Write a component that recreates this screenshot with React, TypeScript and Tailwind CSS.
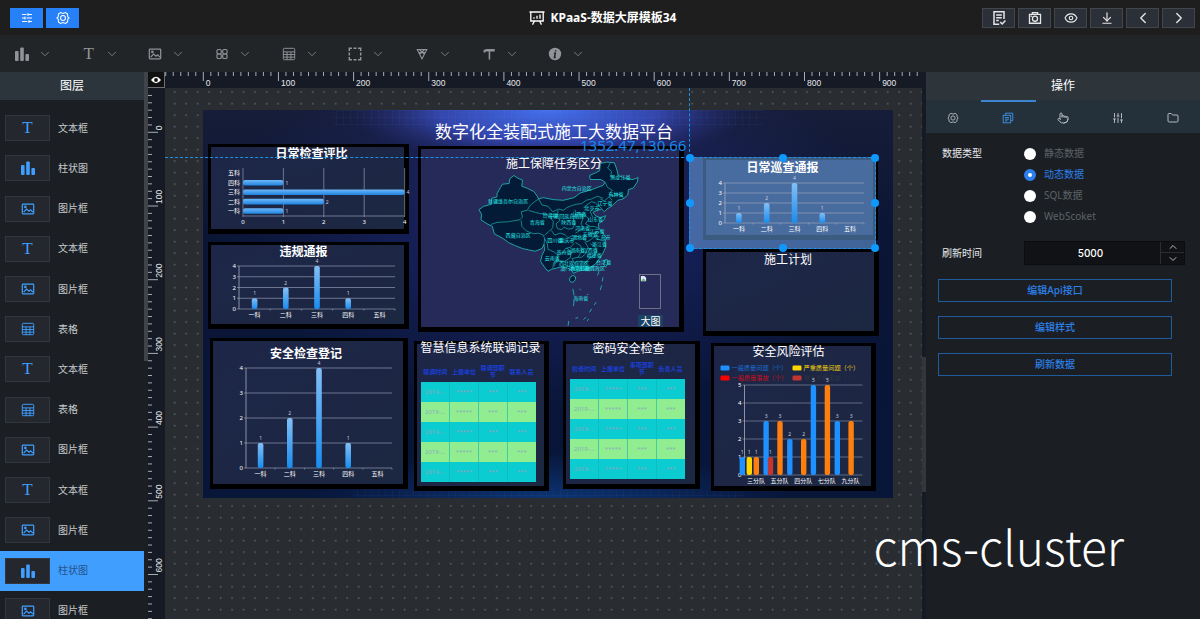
import React, { useState } from 'react';
import {
  ArrowDownToLine,
  ChevronDown,
  ChevronLeft,
  ChevronRight,
  ChevronUp,
  Eye,
  Folder,
  Pointer,
  SlidersHorizontal,
  SlidersVertical,
} from 'lucide-react';

type IconProps = { className?: string };

// ---------- Icons ----------

function BarsIcon({ className }: IconProps) {
  return (
    <svg viewBox="0 0 16 16" className={className} fill="currentColor">
      <rect x="1" y="5" width="3.6" height="10" rx="1" />
      <rect x="6.2" y="1.5" width="3.6" height="13.5" rx="1" />
      <rect x="11.4" y="8" width="3.6" height="7" rx="1" />
    </svg>
  );
}

function ImageIcon({ className }: IconProps) {
  return (
    <svg viewBox="0 0 16 16" className={className} fill="none" stroke="currentColor" strokeWidth="1.4">
      <rect x="1.5" y="2.5" width="13" height="11" rx="0.8" />
      <path d="M3 11.5 6.4 8l2.8 2.6L11 9l2.6 2.6" />
      <circle cx="5" cy="5.6" r="0.8" />
    </svg>
  );
}

function TableIcon({ className }: IconProps) {
  return (
    <svg viewBox="0 0 16 16" className={className} fill="none" stroke="currentColor" strokeWidth="1.1">
      <rect x="1.5" y="1.5" width="13" height="13" rx="1.2" />
      <path d="M1.5 5.6h13M1.5 8.6h13M1.5 11.6h13M5.8 5.6v8.9M10.2 5.6v8.9" />
    </svg>
  );
}

function LoopsIcon({ className }: IconProps) {
  return (
    <svg viewBox="0 0 16 16" className={className} fill="none" stroke="currentColor" strokeWidth="1.3">
      <rect x="2.2" y="2.8" width="5" height="5.2" rx="1.6" />
      <rect x="8.8" y="2.8" width="5" height="5.2" rx="1.6" />
      <rect x="2.2" y="8" width="5" height="5.2" rx="1.6" />
      <rect x="8.8" y="8" width="5" height="5.2" rx="1.6" />
    </svg>
  );
}

function DashedBoxIcon({ className }: IconProps) {
  return (
    <svg viewBox="0 0 16 16" className={className} fill="none" stroke="currentColor" strokeWidth="1.7">
      <path d="M1.5 4.5v-3h3M6.3 1.5h3.4M11.5 1.5h3v3M14.5 6.3v3.4M14.5 11.5v3h-3M9.7 14.5H6.3M4.5 14.5h-3v-3M1.5 9.7V6.3" />
    </svg>
  );
}

function FunnelIcon({ className }: IconProps) {
  return (
    <svg viewBox="0 0 16 16" className={className} fill="none" stroke="currentColor" strokeWidth="1.2">
      <path d="M2.5 3h11L8 13.5zM5 3l5.6 5.5M11 3 5.4 8.5M4.2 6.2h7.6" />
    </svg>
  );
}

function BrushIcon({ className }: IconProps) {
  return (
    <svg viewBox="0 0 16 16" className={className} fill="currentColor">
      <path d="M4 2.2h10.500v3H4zM1.800 3.200h2.200v3.200H1.800zM7.600 5.200h1.800v9.200H7.600z" />
    </svg>
  );
}

function InfoIcon({ className }: IconProps) {
  return (
    <svg viewBox="0 0 16 16" className={className}>
      <circle cx="8" cy="8" r="6.2" fill="currentColor" />
      <path d="M8.6 4.2v1.4M7 7.2h1.3l-.9 4.4h1.4" fill="none" stroke="#212528" strokeWidth="1.5" />
    </svg>
  );
}

function HexGearIcon({ className }: IconProps) {
  return (
    <svg viewBox="0 0 16 16" className={className} fill="none" stroke="currentColor" strokeWidth="1.2">
      <path d="M5.2 1.8 8 2.8l2.8-1 2.4 1.8.2 3L15 8l-1.6 1.4-.2 3-2.4 1.8-2.8-1-2.8 1-2.4-1.8-.2-3L1 8l1.6-1.4.2-3z" />
      <circle cx="8" cy="8" r="2.8" />
    </svg>
  );
}

function NoteCheckIcon({ className }: IconProps) {
  return (
    <svg viewBox="0 0 16 16" className={className} fill="none" stroke="currentColor" strokeWidth="1.5">
      <path d="M13 9V1.8H3v12.4h5.2M5.2 5h5.6M5.2 7.8h5.6M5.2 10.6h2.6M9.2 12l2 2 3.2-3.4" />
    </svg>
  );
}

function CameraIcon({ className }: IconProps) {
  return (
    <svg viewBox="0 0 16 16" className={className} fill="none" stroke="currentColor" strokeWidth="1.5">
      <path d="M1.7 3.800h12.600v10.200H1.700zM5 3.800V1.800h6v2" />
      <circle cx="8" cy="8.800" r="2.900" />
      <path d="M3 6h1.400" />
    </svg>
  );
}

function CopyDocIcon({ className }: IconProps) {
  return (
    <svg viewBox="0 0 16 16" className={className} fill="none" stroke="currentColor" strokeWidth="1.3">
      <path d="M4.6 4V1.6h9.8v9.8H12" />
      <rect x="1.6" y="4.4" width="10" height="10" />
      <path d="M4 7.4h5.2M4 9.6h5.2M4 11.8h3.2" />
    </svg>
  );
}

function BoardIcon({ className }: IconProps) {
  return (
    <svg viewBox="0 0 16 16" className={className} fill="none" stroke="currentColor" strokeWidth="1.3">
      <path d="M.5 2h15M1.8 2v9h12.4V2M5.5 11l-2 3.6M10.5 11l2 3.6M5 8.8V7.2M8 8.8V5.8M11 8.8V4.6" />
    </svg>
  );
}

// ---------- Data ----------

type LayerKind = 'text' | 'bar' | 'image' | 'table';

const LAYER_NAMES: Record<LayerKind, string> = {
  text: '文本框',
  bar: '柱状图',
  image: '图片框',
  table: '表格',
};

const LAYERS: LayerKind[] = [
  'text', 'bar', 'image', 'text', 'image', 'table', 'text',
  'table', 'image', 'text', 'image', 'bar', 'image',
];

const DEPTS = ['一科', '二科', '三科', '四科', '五科'];
const DEPT_VALUES = [1, 2, 4, 1, 0];

const DATA_TYPES = ['静态数据', '动态数据', 'SQL数据', 'WebScoket'];

function LayerIcon({ kind }: { kind: LayerKind }) {
  if (kind === 'text') return <span className="font-['Liberation_Serif',serif] text-[17px] leading-5">T</span>;
  if (kind === 'bar') return <BarsIcon className="h-4 w-4" />;
  if (kind === 'image') return <ImageIcon className="h-3.5 w-3.5" />;
  return <TableIcon className="h-3.5 w-3.5" />;
}

// ---------- Header and toolbar ----------

function Header() {
  const actions = [
    { label: '保存', icon: <NoteCheckIcon className="h-4 w-4" /> },
    { label: '截图', icon: <CameraIcon className="h-3.5 w-3.5" /> },
    { label: '预览', icon: <Eye className="h-3.5 w-3.5" /> },
    { label: '下载', icon: <ArrowDownToLine className="h-3.5 w-3.5" /> },
    { label: '撤销', icon: <ChevronLeft className="h-[18px] w-[18px]" strokeWidth={1.8} /> },
    { label: '重做', icon: <ChevronRight className="h-[18px] w-[18px]" strokeWidth={1.8} /> },
  ];

  return (
    <header className="grid h-[35px] shrink-0 grid-cols-[1fr_auto_1fr] items-center bg-[#1e1e1e] pl-2.5 pr-[5px]">
      <div className="flex gap-[3px]">
        <button type="button" aria-label="图层" className="flex h-5 w-[33px] items-center justify-center bg-[#2680f7] text-white">
          <SlidersHorizontal className="h-3 w-3" />
        </button>
        <button type="button" aria-label="设置" className="flex h-5 w-[33px] items-center justify-center bg-[#2680f7] text-white">
          <HexGearIcon className="h-3.5 w-3.5" />
        </button>
      </div>
      <h1 className="flex items-center gap-1.5 text-xs font-bold text-white">
        <BoardIcon className="h-4 w-4" />
        KPaaS-数据大屏模板34
      </h1>
      <div className="flex justify-end gap-[3px]">
        {actions.map((a) => (
          <button
            key={a.label}
            type="button"
            aria-label={a.label}
            className="flex h-5 w-[33px] items-center justify-center border border-[#41454c] bg-[#2b2f38] text-[#e6e6e6]"
          >
            {a.icon}
          </button>
        ))}
      </div>
    </header>
  );
}

function Toolbar() {
  const tools = [
    { label: '图表', icon: <BarsIcon className="h-4 w-4" /> },
    { label: '文本', icon: <span className="font-['Liberation_Serif',serif] text-[17px] leading-5">T</span> },
    { label: '图片', icon: <ImageIcon className="h-3.5 w-3.5" /> },
    { label: '组件', icon: <LoopsIcon className="h-3.5 w-3.5" /> },
    { label: '表格', icon: <TableIcon className="h-3.5 w-3.5" /> },
    { label: '边框', icon: <DashedBoxIcon className="h-3.5 w-3.5" /> },
    { label: '筛选', icon: <FunnelIcon className="h-3.5 w-3.5" /> },
    { label: '样式', icon: <BrushIcon className="h-3.5 w-3.5" /> },
    { label: '信息', icon: <InfoIcon className="h-4 w-4" /> },
  ];

  return (
    <nav className="h-[37px] shrink-0 bg-[#212528]">
      <div className="grid h-full w-[600px] grid-cols-9">
        {tools.map((t) => (
          <button key={t.label} type="button" aria-label={t.label} className="flex items-center gap-2 pl-3.5 text-[#909498]">
            <span className="flex w-4 justify-center">{t.icon}</span>
            <ChevronDown className="h-3.5 w-3.5 text-[#7d8185]" strokeWidth={1.6} />
          </button>
        ))}
      </div>
    </nav>
  );
}

// ---------- Left layers panel ----------

function LayerPanel() {
  const [selected, setSelected] = useState(11);

  return (
    <aside className="flex w-[148px] shrink-0 bg-[#1b1f23]">
      <div className="flex w-36 flex-col">
        <h2 className="flex h-7 shrink-0 items-center justify-center bg-[#2d353c] text-xs text-white">图层</h2>
        <div className="min-h-0 flex-1 overflow-hidden pt-2">
          <ul className="grid h-[523px] auto-rows-fr">
            {LAYERS.map((kind, i) => (
              <li key={i}>
                <button
                  type="button"
                  onClick={() => setSelected(i)}
                  className={
                    selected === i
                      ? 'flex h-full w-full items-center gap-2 bg-[#409eff] pl-[5px] text-[10px] text-[#24548c]'
                      : 'flex h-full w-full items-center gap-2 pl-[5px] text-[10px] text-[#c5c9cd]'
                  }
                >
                  <span className="flex h-[26px] w-[45px] items-center justify-center border border-[#32373d] bg-[#24282e] text-[#409eff]">
                    <LayerIcon kind={kind} />
                  </span>
                  {LAYER_NAMES[kind]}
                </button>
              </li>
            ))}
          </ul>
        </div>
      </div>
      <div className="h-[289px] w-1 bg-[#40444a]" />
    </aside>
  );
}

// ---------- Rulers ----------

const H_STEP = 7.515;
const V_STEP = 7.37;

function HorizontalRuler() {
  const ticks = Array.from({ length: 101 }, (_, i) => i - 5);
  return (
    <svg className="h-4 min-w-0 flex-1 bg-[#151a24] font-['Liberation_Sans',sans-serif]" aria-hidden="true">
      {ticks.map((t) => {
        const x = 38.3 + t * H_STEP;
        const major = t % 10 === 0;
        return (
          <g key={t}>
            <line x1={x} x2={x} y1="0" y2={major ? 9 : 4} stroke="#b9bdc4" strokeWidth="0.9" />
            {major && (
              <text x={x + 2.5} y="14" fontSize="8.5" fill="#e4e6ea">
                {t * 10}
              </text>
            )}
          </g>
        );
      })}
    </svg>
  );
}

function VerticalRuler() {
  const ticks = Array.from({ length: 72 }, (_, i) => i - 5);
  return (
    <svg className="h-full w-[17px] shrink-0 bg-[#151a24] font-['Liberation_Sans',sans-serif]" aria-hidden="true">
      {ticks.map((t) => {
        const y = 44.3 + t * V_STEP;
        const major = t % 10 === 0;
        return (
          <g key={t}>
            <line x1="0" x2={major ? 10 : 4} y1={y} y2={y} stroke="#b9bdc4" strokeWidth="0.9" />
            {major && (
              <text transform={`translate(14 ${y - 2}) rotate(-90)`} fontSize="8.5" fill="#e4e6ea">
                {t * 10}
              </text>
            )}
          </g>
        );
      })}
    </svg>
  );
}

// ---------- Charts ----------

interface ColumnChartProps {
  width: number;
  height: number;
  left: number;
  right: number;
  top: number;
  bottom: number;
}

function ColumnChart({ width, height, left, right, top, bottom }: ColumnChartProps) {
  const step = (right - left) / 5;
  const unit = (bottom - top) / 4;
  return (
    <svg viewBox={`0 0 ${width} ${height}`} className="absolute inset-0 h-full w-full overflow-visible">
      <defs>
        <linearGradient id="column" x1="0" y1="0" x2="0" y2="1">
          <stop offset="0" stopColor="#83bff6" />
          <stop offset="1" stopColor="#188df0" />
        </linearGradient>
      </defs>
      {[0, 1, 2, 3, 4].map((n) => (
        <g key={n}>
          <line x1={left - 2} x2={right} y1={bottom - n * unit} y2={bottom - n * unit} stroke="#a3adc4" strokeWidth="0.6" />
          <text x={left - 3} y={bottom - n * unit + 2} fontSize="6" fill="#fff" textAnchor="end">
            {n}
          </text>
        </g>
      ))}
      <line x1={left} x2={left} y1={top} y2={bottom} stroke="#a3adc4" strokeWidth="0.8" />
      {DEPTS.map((name, i) => {
        const x = left + (i + 0.5) * step;
        const h = DEPT_VALUES[i] * unit;
        return (
          <g key={name}>
            <line x1={x + step / 2} x2={x + step / 2} y1={bottom} y2={bottom + 1.5} stroke="#a3adc4" strokeWidth="0.6" />
            {h > 0 && <rect x={x - 2.8} y={bottom - h} width="5.6" height={h} rx="2" fill="url(#column)" />}
            {h > 0 && (
              <text x={x} y={bottom - h - 3} fontSize="5" fill="#c9cfdd" textAnchor="middle">
                {DEPT_VALUES[i]}
              </text>
            )}
            <text x={x} y={bottom + 8} fontSize="6" fill="#fff" textAnchor="middle">
              {name}
            </text>
          </g>
        );
      })}
    </svg>
  );
}

function RowChart() {
  return (
    <svg viewBox="0 0 193 82" className="absolute inset-0 h-full w-full overflow-visible">
      <defs>
        <linearGradient id="row" x1="0" y1="0" x2="0" y2="1">
          <stop offset="0" stopColor="#6fb8f8" />
          <stop offset="1" stopColor="#1f83e0" />
        </linearGradient>
      </defs>
      {[0, 1, 2, 3, 4].map((n) => (
        <g key={n}>
          <line x1={32 + n * 40.4} x2={32 + n * 40.4} y1="21" y2="70" stroke="#a3adc4" strokeWidth="0.6" />
          <text x={32 + n * 40.4} y="77" fontSize="6" fill="#fff" textAnchor="middle">
            {n}
          </text>
        </g>
      ))}
      <line x1="32" x2="193.6" y1="69" y2="69" stroke="#a3adc4" strokeWidth="0.6" />
      {DEPTS.map((name, i) => {
        const y = 64 - i * 9.4;
        const w = DEPT_VALUES[i] * 40.4;
        return (
          <g key={name}>
            <text x="29" y={y + 2} fontSize="6" fill="#fff" textAnchor="end">
              {name}
            </text>
            {w > 0 && <rect x="32" y={y - 2.8} width={w} height="5.6" rx="2" fill="url(#row)" />}
            {w > 0 && (
              <text x={34 + w} y={y + 2} fontSize="5" fill="#c9cfdd">
                {DEPT_VALUES[i]}
              </text>
            )}
          </g>
        );
      })}
    </svg>
  );
}

const RISK_BARS = [
  { x: -2.2, v: 1, c: '#1e90ff' },
  { x: 4.8, v: 1, c: '#ffd700' },
  { x: 11.8, v: 1, c: '#ff7f0e' },
  { x: 21.6, v: 3, c: '#1e90ff' },
  { x: 26, v: 1, c: '#c23531' },
  { x: 35.5, v: 3, c: '#ff7f0e' },
  { x: 45.3, v: 2, c: '#1e90ff' },
  { x: 59.2, v: 2, c: '#ff7f0e' },
  { x: 68.9, v: 5, c: '#1e90ff' },
  { x: 82.9, v: 5, c: '#ff7f0e' },
  { x: 92.8, v: 3, c: '#1e90ff' },
  { x: 106.6, v: 3, c: '#ff7f0e' },
];

const RISK_LEGEND = [
  { x: 6, y: 22, c: '#1e90ff', t: '#1c6fd0', name: '一般质量问题（个）' },
  { x: 78, y: 22, c: '#ffd700', t: '#f2d10a', name: '严重质量问题（个）' },
  { x: 6, y: 32, c: '#ff0000', t: '#c4101c', name: '一般质量事故（个）' },
  { x: 78, y: 32, c: '#c23531', t: '#2b3140', name: '重大质量事故（个）' },
];

function RiskChart() {
  return (
    <svg viewBox="0 0 156 140" className="absolute inset-0 h-full w-full overflow-visible">
      {RISK_LEGEND.map((l) => (
        <g key={l.name}>
          <rect x={l.x} y={l.y - 2.5} width="9" height="5" rx="1.2" fill={l.c} />
          <text x={l.x + 11} y={l.y + 2.3} fontSize="6.2" fill={l.t}>
            {l.name}
          </text>
        </g>
      ))}
      {[0, 1, 2, 3, 4, 5].map((n) => (
        <g key={n}>
          <line x1="28" x2="148" y1={129 - n * 18} y2={129 - n * 18} stroke="#8f98ad" strokeWidth="0.6" />
          <text x="27" y={131 - n * 18} fontSize="6" fill="#fff" textAnchor="end">
            {n}
          </text>
        </g>
      ))}
      <line x1="30" x2="30" y1="39" y2="129" stroke="#a3adc4" strokeWidth="0.8" />
      {RISK_BARS.map((b) => (
        <g key={b.x}>
          <rect x={27.3 + b.x} y={129 - b.v * 18} width="5.4" height={b.v * 18} rx="2" fill={b.c} />
          <text x={30 + b.x} y={126 - b.v * 18} fontSize="5" fill="#c9cfdd" textAnchor="middle">
            {b.v}
          </text>
        </g>
      ))}
      {['三分队', '五分队', '四分队', '七分队', '九分队'].map((name, i) => (
        <text key={name} x={41.5 + i * 23.6} y="137" fontSize="6" fill="#fff" textAnchor="middle">
          {name}
        </text>
      ))}
    </svg>
  );
}

// ---------- Map ----------

const PROVINCES: [number, number, string][] = [
  [295, 295, '新疆维吾尔自治区'],
  [500, 257, '内蒙古自治区'],
  [630, 224, '黑龙江省'],
  [617, 276, '吉林省'],
  [584, 302, '辽宁省'],
  [545, 318, '北京市'],
  [420, 337, '甘肃省'],
  [470, 341, '宁夏回族自治区'],
  [506, 336, '山西省'],
  [556, 350, '山东省'],
  [382, 360, '青海省'],
  [476, 358, '陕西省'],
  [517, 376, '河南省'],
  [325, 399, '西藏自治区'],
  [560, 386, '江苏省'],
  [540, 396, '安徽省'],
  [578, 403, '上海市'],
  [434, 413, '四川省'],
  [470, 413, '重庆市'],
  [508, 404, '湖北省'],
  [568, 425, '浙江省'],
  [462, 447, '贵州省'],
  [502, 443, '湖南省'],
  [540, 443, '江西省'],
  [552, 458, '福建省'],
  [427, 466, '云南省'],
  [484, 480, '广西壮族自治区'],
  [580, 479, '台湾省'],
  [514, 495, '广东省'],
  [532, 496, '香港特别行政区'],
  [503, 497, '澳门特别行政区'],
  [512, 584, '海南省'],
];

function ChinaMap() {
  return (
    <svg viewBox="36 135 768 531" className="absolute inset-0 h-full w-full">
      <g fill="#031b36" stroke="#1fb5b5" strokeWidth="2.6" strokeLinejoin="round">
        <path d="M208 316 222 306 245 300 246 282 262 278 262 268 272 250 278 240 298 238 300 224 312 214 324 222 338 228 336 246 352 252 372 262 382 276 386 284 400 280 430 286 460 288 492 280 510 266 540 258 560 250 578 244 584 234 572 226 540 226 538 214 556 206 568 200 570 178 590 174 612 176 618 192 624 214 648 224 668 226 683 220 680 234 668 252 654 256 652 272 638 284 622 288 606 304 590 314 582 322 574 314 560 318 548 324 556 334 570 340 586 334 580 348 564 358 566 372 578 386 588 400 584 414 586 428 578 446 568 462 556 478 540 488 520 496 502 500 490 506 484 496 472 490 456 486 440 490 424 494 414 500 404 488 392 470 396 452 404 436 402 420 396 432 376 440 356 436 338 432 318 424 296 414 280 402 254 388 248 366 232 358 214 346 216 330z" />
        <path d="M480 518 488 512 496 516 496 524 490 532 482 532 478 526z" />
        <path d="M584 466 590 464 592 474 586 488 580 480z" />
      </g>
      <g fill="none" stroke="#1fb5b5" strokeWidth="2" strokeLinejoin="round">
        <path d="M244 360 262 354 296 352 330 346 338 338 334 322 352 318 360 304 374 292 386 284" />
        <path d="M334 348 336 366 350 380 372 388 386 386 400 392 404 402 402 422" />
        <path d="M356 318 376 324 392 328 406 326 418 338 430 350 428 370 418 380 404 392" />
        <path d="M386 284 396 302 414 306 428 322 446 314 460 318 470 310 484 304 498 300 514 298 528 288 544 284 562 276 578 282" />
        <path d="M444 318 442 336 450 348 438 358 442 372 454 376 462 368 474 374 488 372 494 358 490 344 498 326 494 316" />
        <path d="M494 332 514 328 518 342 512 360 522 370 506 380 496 386M520 322 528 336 536 344 526 358 540 366 552 366 566 372" />
        <path d="M424 378 434 392 450 386 464 390 474 400 486 394 504 396 520 404 530 412 544 404 552 396 560 404 584 410" />
        <path d="M404 402 412 418 414 434 432 442 444 452 458 444 466 432 482 428 492 416M444 452 442 464 432 472 428 490M470 430 484 444 480 460 464 470 448 468 434 476" />
        <path d="M496 414 512 424 514 440 504 458 486 462M524 412 534 428 526 448 514 458 504 458M540 418 554 426 560 440 546 456 532 466 522 478M486 462 492 476 504 470 522 470" />
        <path d="M584 234 592 250 606 258 596 270 610 276 626 270 640 280M600 176 592 192 604 202 600 218 618 222M570 284 582 290 596 278 606 288" />
        <path d="M520 310 530 302 544 292 556 296 564 304 574 312M548 340 540 322 550 312" />
      </g>
      <g fill="none" stroke="#1fb5b5" strokeWidth="2.6">
        <path d="M488 552l4 20M492 586l-2 18M476 648l-2 14M496 640l8-2M520 644l8-8M530 648l6-6M544 612l-6 10M552 600l6-8M570 556l4-14M576 530l2-12M508 552l4 4M530 570l4-2M566 500l-4 12" />
      </g>
      {PROVINCES.map(([x, y, name]) => (
        <text key={name} x={x} y={y} fontSize="15" fill="#26e6e6" textAnchor="middle">
          {name}
        </text>
      ))}
    </svg>
  );
}

// ---------- Board widgets ----------

interface WidgetProps {
  title?: string;
  place: string;
  titleClass?: string;
  children?: React.ReactNode;
}

function WidgetTitle({ title, className }: { title: string; className?: string }) {
  return <h3 className={`relative text-center text-xs leading-[14px] whitespace-nowrap text-white ${className}`}>{title}</h3>;
}

function Widget({ title, place, titleClass, children }: WidgetProps) {
  return (
    <section
      className={`absolute border-b-[5px] border-l-[3px] border-r-[5px] border-t-[3px] border-black bg-gradient-to-br from-[#1d2648] to-[#1c2741] ${place}`}
    >
      {children}
      {title && <WidgetTitle title={title} className={titleClass} />}
    </section>
  );
}

function DataTable({ place, headers }: { place: string; headers: string[] }) {
  return (
    <table className={`absolute w-[115px] table-fixed border-collapse text-[6px] leading-[7px] ${place}`}>
      <thead>
        <tr className="h-5 text-[#1b3fd6]">
          {headers.map((h) => (
            <th key={h} className="px-0.5 font-bold">{h}</th>
          ))}
        </tr>
      </thead>
      <tbody>
        {[0, 1, 2, 3, 4].map((r) => (
          <tr key={r} className="h-5 text-center text-[#8fa6bd] odd:bg-[#0bccd0] even:bg-[#90ee90]">
            <td className="border-r border-[#10b4b4]/60 pl-1 text-left">2019-...</td>
            <td className="border-r border-[#10b4b4]/60">*****</td>
            <td className="border-r border-[#10b4b4]/60">***</td>
            <td>***</td>
          </tr>
        ))}
      </tbody>
    </table>
  );
}

function BoardBackground() {
  return (
    <svg viewBox="0 0 690 388" preserveAspectRatio="none" className="absolute inset-0 h-full w-full">
      <defs>
        <linearGradient id="base" x1="0" y1="0" x2="0" y2="1">
          <stop offset="0" stopColor="#161d38" />
          <stop offset="0.3" stopColor="#0b1535" />
          <stop offset="1" stopColor="#08163a" />
        </linearGradient>
        <radialGradient id="middle">
          <stop offset="0" stopColor="#222a7a" stopOpacity="0.8" />
          <stop offset="1" stopColor="#222a7a" stopOpacity="0" />
        </radialGradient>
        <radialGradient id="glow">
          <stop offset="0" stopColor="#4471ee" />
          <stop offset="0.55" stopColor="#3a4fc4" stopOpacity="0.8" />
          <stop offset="1" stopColor="#2a2f80" stopOpacity="0" />
        </radialGradient>
        <radialGradient id="floor">
          <stop offset="0" stopColor="#0f4a9c" stopOpacity="0.6" />
          <stop offset="1" stopColor="#0f4a9c" stopOpacity="0" />
        </radialGradient>
        <pattern id="mesh" width="7" height="7" patternUnits="userSpaceOnUse">
          <path d="M7 0H0V7" fill="none" stroke="#6f8cf0" strokeOpacity="0.16" strokeWidth="0.6" />
        </pattern>
      </defs>
      <rect width="690" height="388" fill="url(#base)" />
      <ellipse cx="345" cy="110" rx="330" ry="190" fill="url(#middle)" />
      <ellipse cx="345" cy="0" rx="200" ry="56" fill="url(#glow)" />
      <ellipse cx="345" cy="392" rx="240" ry="50" fill="url(#floor)" />
      <rect x="130" width="430" height="16" fill="url(#mesh)" />
      <rect x="150" y="380" width="390" height="8" fill="url(#mesh)" />
    </svg>
  );
}

function Handle({ place }: { place: string }) {
  return <span className={`absolute h-2 w-2 rounded-full bg-[#0d99ff] ${place}`} />;
}

function Board() {
  return (
    <div className="absolute left-[38px] top-[22px] h-[388px] w-[690px]">
      <BoardBackground />
      <h2 className="absolute left-0 top-3 w-full pl-3 text-center text-[17px] leading-5 text-white">
        数字化全装配式施工大数据平台
      </h2>

      <Widget title="日常检查评比" place="left-[5px] top-[34px] h-[90px] w-[201px]" titleClass="pl-2 font-bold">
        <RowChart />
      </Widget>
      <Widget title="违规通报" place="left-[5px] top-[132px] h-[87px] w-[201px]" titleClass="pr-2 font-bold">
        <ColumnChart width={193} height={79} left={28} right={184} top={21} bottom={64} />
      </Widget>
      <Widget title="安全检查登记" place="left-[7px] top-[228px] h-[151px] w-[198px]" titleClass="pr-1 pt-1.5 font-bold">
        <ColumnChart width={190} height={143} left={33} right={179} top={27} bottom={127} />
      </Widget>

      <Widget title="施工保障任务区分" place="left-[215px] top-[36px] h-[186px] w-[266px]" titleClass="pl-2 pt-2">
        <div className="absolute inset-0 bg-[#262a58]" />
        <ChinaMap />
        <div className="absolute bottom-[18px] right-[18px] h-[35px] w-[22px] border border-[#6d7086]">
          <svg viewBox="0 0 8 8" className="h-[7px] w-[7px]">
            <path d="M1 1h4l2 2v4H1z" fill="#dfe9f5" />
            <path d="M1.500 6.500 4 4l2.500 2.500z" fill="#4caf50" />
          </svg>
        </div>
        <button type="button" className="absolute bottom-0 right-4 h-3 w-[25px] bg-[#1b4265] text-[10px] leading-3 text-white">
          大图
        </button>
      </Widget>
      <Widget title="智慧信息系统联调记录" place="left-[211px] top-[231px] h-[150px] w-[135px]" titleClass="-mt-[3px]">
        <DataTable place="left-1 top-[18px]" headers={['联调时间', '上报单位', '联调部职节', '联系人员']} />
      </Widget>
      <Widget title="密码安全检查" place="left-[360px] top-[231px] h-[148px] w-[137px]" titleClass="-mt-0.5 pr-1">
        <DataTable place="left-1 top-[15px]" headers={['检查时间', '上报单位', '事项部职节', '负责人员']} />
      </Widget>

      <Widget place="left-[500px] top-[47px] h-[83px] w-[175px]" />
      <Widget title="施工计划" place="left-[500px] top-[139px] h-[87px] w-[176px]" titleClass="pr-1 pt-px" />
      <Widget title="安全风险评估" place="left-[508px] top-[233px] h-[148px] w-[165px]" titleClass="-mt-px pr-2">
        <RiskChart />
      </Widget>

      {/* Selected widget: tinted box with its guides and handles */}
      <div className="absolute -left-[38px] top-[47px] w-[524px] border-t border-dashed border-[#1a93e6]" />
      <div className="absolute -top-[22px] left-[486px] h-[69px] border-l border-dashed border-[#1a93e6]" />
      <div className="absolute left-[486px] top-[47px] h-[92px] w-[187px] border border-dashed border-[#1a93e6] bg-[#6ea6ea]/55">
        <div className="absolute left-4 top-0.5 h-[75px] w-[167px]">
          <ColumnChart width={167} height={75} left={19} right={158} top={23} bottom={63} />
          <WidgetTitle title="日常巡查通报" className="pr-3.5 pt-px font-bold" />
        </div>
        <Handle place="-left-1 -top-1" />
        <Handle place="left-[89px] -top-1" />
        <Handle place="-right-1 -top-1" />
        <Handle place="-left-1 top-[41px]" />
        <Handle place="-right-1 top-[41px]" />
        <Handle place="-bottom-1 -left-1" />
        <Handle place="-bottom-1 left-[89px]" />
        <Handle place="-bottom-1 -right-1" />
      </div>
      <span className="absolute left-[377px] top-[25px] text-[15px] leading-5 text-[#1789ee]">1352.47,130.66</span>
    </div>
  );
}

function Workspace() {
  return (
    <main className="flex min-w-0 flex-1 flex-col bg-[#151a24]">
      <div className="flex shrink-0">
        <button type="button" aria-label="显示标尺" className="flex h-4 w-[17px] items-center justify-center border-b border-r border-[#6b6f76] bg-[#111]">
          <svg viewBox="0 0 12 12" className="h-3 w-3">
            <path d="M1 6q5-6.5 10 0Q6 12.5 1 6z" fill="#fff" />
            <circle cx="6" cy="6" r="1.9" fill="#111" />
          </svg>
        </button>
        <HorizontalRuler />
      </div>
      <div className="flex min-h-0 flex-1">
        <VerticalRuler />
        <div className="relative min-w-0 flex-1 overflow-hidden bg-[#292d32]">
          <svg className="absolute inset-0 h-full w-full" aria-hidden="true">
            <defs>
              <pattern id="dots" width="11.5" height="11.5" patternUnits="userSpaceOnUse" x="4" y="-1.5">
                <rect x="5" y="5" width="1.3" height="1.3" fill="#73777c" />
              </pattern>
            </defs>
            <rect width="100%" height="100%" fill="url(#dots)" />
          </svg>
          <Board />
        </div>
        <div className="w-1 pt-[269px]">
          <div className="h-[135px] bg-[#33373b]" />
        </div>
      </div>
    </main>
  );
}

// ---------- Right operations panel ----------

function OperationPanel() {
  const [tab, setTab] = useState(1);
  const [dataType, setDataType] = useState('动态数据');
  const [interval, setIntervalValue] = useState(5000);

  const tabs = [
    { label: '配置', icon: <HexGearIcon className="h-3 w-3" /> },
    { label: '数据', icon: <CopyDocIcon className="h-3 w-3" /> },
    { label: '交互', icon: <Pointer className="h-3 w-3" /> },
    { label: '参数', icon: <SlidersVertical className="h-3 w-3" /> },
    { label: '文件', icon: <Folder className="h-3 w-3" /> },
  ];

  return (
    <aside className="w-[274px] shrink-0 bg-[#1b1f23]">
      <h2 className="flex h-7 items-center justify-center bg-[#2d343a] text-xs text-white">操作</h2>
      <div className="grid h-[33px] grid-cols-5 bg-[#25313a]">
        {tabs.map((t, i) => (
          <button
            key={t.label}
            type="button"
            aria-label={t.label}
            onClick={() => setTab(i)}
            className={
              tab === i
                ? 'flex items-center justify-center border-t-2 border-[#3d85cf] text-[#3d8de0]'
                : 'flex items-center justify-center border-t-2 border-transparent text-[#b4bac0]'
            }
          >
            {t.icon}
          </button>
        ))}
      </div>

      <form className="px-3 pt-2.5 text-[10px]">
        <fieldset className="flex pl-1">
          <legend className="float-left w-[82px] leading-[21px] text-[#e8eaec]">数据类型</legend>
          <div className="flex flex-col">
            {DATA_TYPES.map((name) => (
              <label
                key={name}
                className={
                  dataType === name
                    ? 'flex h-[21px] items-center gap-2 text-[#2d7fea]'
                    : 'flex h-[21px] items-center gap-2 text-[#5d6166]'
                }
              >
                <input
                  type="radio"
                  name="dataType"
                  checked={dataType === name}
                  onChange={() => setDataType(name)}
                  className="h-3 w-3 appearance-none rounded-full bg-white checked:border-4 checked:border-[#2d7ff0]"
                />
                {name}
              </label>
            ))}
          </div>
        </fieldset>

        <div className="mt-3.5 flex items-center pl-1">
          <label htmlFor="interval" className="w-[82px] text-[#e8eaec]">刷新时间</label>
          <div className="flex h-6 w-[161px] border border-[#0c0d0f] bg-[#101215]">
            <input
              id="interval"
              type="text"
              inputMode="numeric"
              value={interval}
              onChange={(e) => setIntervalValue(Number(e.target.value) || 0)}
              className="min-w-0 flex-1 bg-transparent pr-1 text-center font-['Inter',sans-serif] text-[10px] font-medium text-white outline-none"
            />
            <div className="grid w-6 grid-rows-2 border-l border-[#2a2d31] text-[#b4b8bc]">
              <button
                type="button"
                aria-label="增加"
                onClick={() => setIntervalValue(interval + 1)}
                className="flex items-center justify-center border-b border-[#2a2d31]"
              >
                <ChevronUp className="h-3 w-3" />
              </button>
              <button
                type="button"
                aria-label="减少"
                onClick={() => setIntervalValue(interval - 1)}
                className="flex items-center justify-center"
              >
                <ChevronDown className="h-3 w-3" />
              </button>
            </div>
          </div>
        </div>

        <div className="mt-3.5 flex w-[234px] flex-col gap-3.5">
          {['编辑Api接口', '编辑样式', '刷新数据'].map((name) => (
            <button key={name} type="button" className="h-[23px] border border-[#1f5c9e] font-medium text-[#2d7fea]">
              {name}
            </button>
          ))}
        </div>
      </form>
    </aside>
  );
}

export default function App() {
  return (
    <div className="relative flex h-screen flex-col overflow-hidden bg-[#1b1f23] font-['Noto_Sans','Noto_Sans_CJK_SC',sans-serif]">
      <Header />
      <Toolbar />
      <div className="flex min-h-0 flex-1">
        <LayerPanel />
        <Workspace />
        <OperationPanel />
      </div>
      <p className="absolute bottom-10 right-[76px] font-['Noto_Sans_CJK_SC',sans-serif] text-[48px] leading-[68px] font-light text-white">
        cms-cluster
      </p>
    </div>
  );
}
